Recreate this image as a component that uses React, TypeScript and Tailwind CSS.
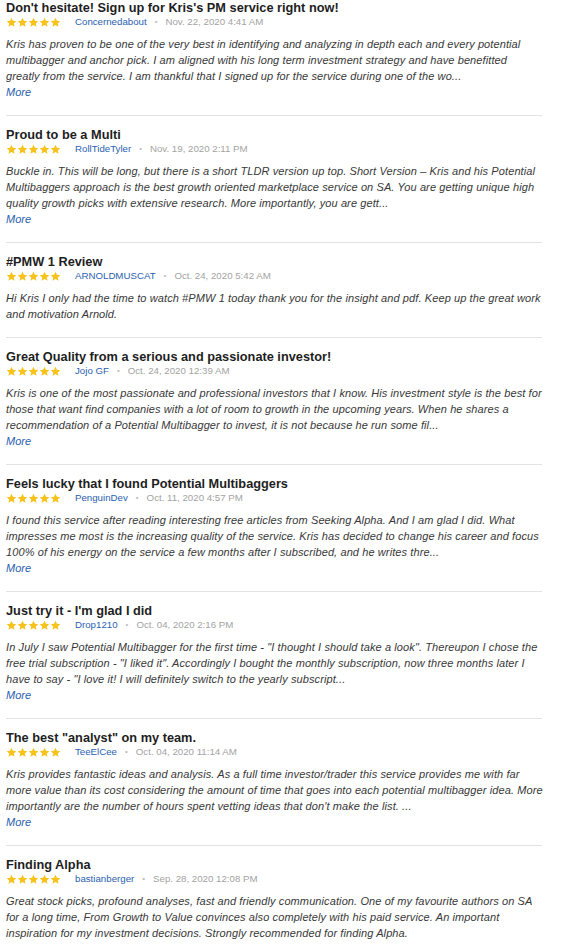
import React from "react";

type Review = {
	title: string;
	author: string;
	date: string;
	lines: string[];
	more?: boolean;
};

const reviews: Review[] = [
	{
		title: "Don't hesitate! Sign up for Kris's PM service right now!",
		author: "Concernedabout",
		date: "Nov. 22, 2020 4:41 AM",
		lines: [
			"Kris has proven to be one of the very best in identifying and analyzing in depth each and every potential",
			"multibagger and anchor pick. I am aligned with his long term investment strategy and have benefitted",
			"greatly from the service. I am thankful that I signed up for the service during one of the wo...",
		],
		more: true,
	},
	{
		title: "Proud to be a Multi",
		author: "RollTideTyler",
		date: "Nov. 19, 2020 2:11 PM",
		lines: [
			"Buckle in. This will be long, but there is a short TLDR version up top. Short Version – Kris and his Potential",
			"Multibaggers approach is the best growth oriented marketplace service on SA. You are getting unique high",
			"quality growth picks with extensive research. More importantly, you are gett...",
		],
		more: true,
	},
	{
		title: "#PMW 1 Review",
		author: "ARNOLDMUSCAT",
		date: "Oct. 24, 2020 5:42 AM",
		lines: [
			"Hi Kris I only had the time to watch #PMW 1 today thank you for the insight and pdf. Keep up the great work",
			"and motivation Arnold.",
		],
	},
	{
		title: "Great Quality from a serious and passionate investor!",
		author: "Jojo GF",
		date: "Oct. 24, 2020 12:39 AM",
		lines: [
			"Kris is one of the most passionate and professional investors that I know. His investment style is the best for",
			"those that want find companies with a lot of room to growth in the upcoming years. When he shares a",
			"recommendation of a Potential Multibagger to invest, it is not because he run some fil...",
		],
		more: true,
	},
	{
		title: "Feels lucky that I found Potential Multibaggers",
		author: "PenguinDev",
		date: "Oct. 11, 2020 4:57 PM",
		lines: [
			"I found this service after reading interesting free articles from Seeking Alpha. And I am glad I did. What",
			"impresses me most is the increasing quality of the service. Kris has decided to change his career and focus",
			"100% of his energy on the service a few months after I subscribed, and he writes thre...",
		],
		more: true,
	},
	{
		title: "Just try it - I'm glad I did",
		author: "Drop1210",
		date: "Oct. 04, 2020 2:16 PM",
		lines: [
			"In July I saw Potential Multibagger for the first time - \"I thought I should take a look\". Thereupon I chose the",
			"free trial subscription - \"I liked it\". Accordingly I bought the monthly subscription, now three months later I",
			"have to say - \"I love it! I will definitely switch to the yearly subscript...",
		],
		more: true,
	},
	{
		title: "The best \"analyst\" on my team.",
		author: "TeeElCee",
		date: "Oct. 04, 2020 11:14 AM",
		lines: [
			"Kris provides fantastic ideas and analysis. As a full time investor/trader this service provides me with far",
			"more value than its cost considering the amount of time that goes into each potential multibagger idea. More",
			"importantly are the number of hours spent vetting ideas that don't make the list. ...",
		],
		more: true,
	},
	{
		title: "Finding Alpha",
		author: "bastianberger",
		date: "Sep. 28, 2020 12:08 PM",
		lines: [
			"Great stock picks, profound analyses, fast and friendly communication. One of my favourite authors on SA",
			"for a long time, From Growth to Value convinces also completely with his paid service. An important",
			"inspiration for my investment decisions. Strongly recommended for finding Alpha.",
		],
	},
];

const Star = () => (
	<svg width="11" height="11" viewBox="0 0 24 24" className="block">
		<path
			fill="#f7c21a"
			d="M12 1.5l3.1 6.9 7.4.7-5.6 5 1.7 7.4L12 17.6l-6.6 3.9 1.7-7.4-5.6-5 7.4-.7z"
		/>
	</svg>
);

const ReviewItem = ({ review, first }: { review: Review; first: boolean }) => {
	return (
		<div className={first ? "pt-0" : "pt-[11px]"}>
			<h3 className="text-[12.75px] leading-[15px] font-bold text-[#1e1e1e]">
				{review.title}
			</h3>
			<div className="flex items-center h-[14px] text-[9.7px] leading-[14px]">
				<div className="flex">
					<Star />
					<Star />
					<Star />
					<Star />
					<Star />
				</div>
				<span className="ml-[14px] text-[#2a62b0]">{review.author}</span>
				<span className="mx-[8px] text-[8px] text-[#bdbdbd]">•</span>
				<span className="text-[#a3a3a3]">{review.date}</span>
			</div>
			<p className="mt-[7px] text-[11px] leading-4 italic tracking-[0.1px] text-[#383838] whitespace-nowrap">
				{review.lines.map((l, i) => (
					<span key={i} className="block">
						{l}
					</span>
				))}
			</p>
			{review.more && (
				<a className="block text-[11px] leading-4 italic text-[#2a62b0]">More</a>
			)}
			<div className="mt-[15px] h-px w-[536px] bg-[#e3e3e3]"></div>
		</div>
	);
};

const App = () => {
	return (
		<div
			className="bg-white min-h-screen pl-[6px]"
			style={{ fontFamily: '"Liberation Sans", Arial, sans-serif' }}
		>
			{reviews.map((r, i) => (
				<ReviewItem key={i} review={r} first={i === 0} />
			))}
		</div>
	);
};

export default App;
